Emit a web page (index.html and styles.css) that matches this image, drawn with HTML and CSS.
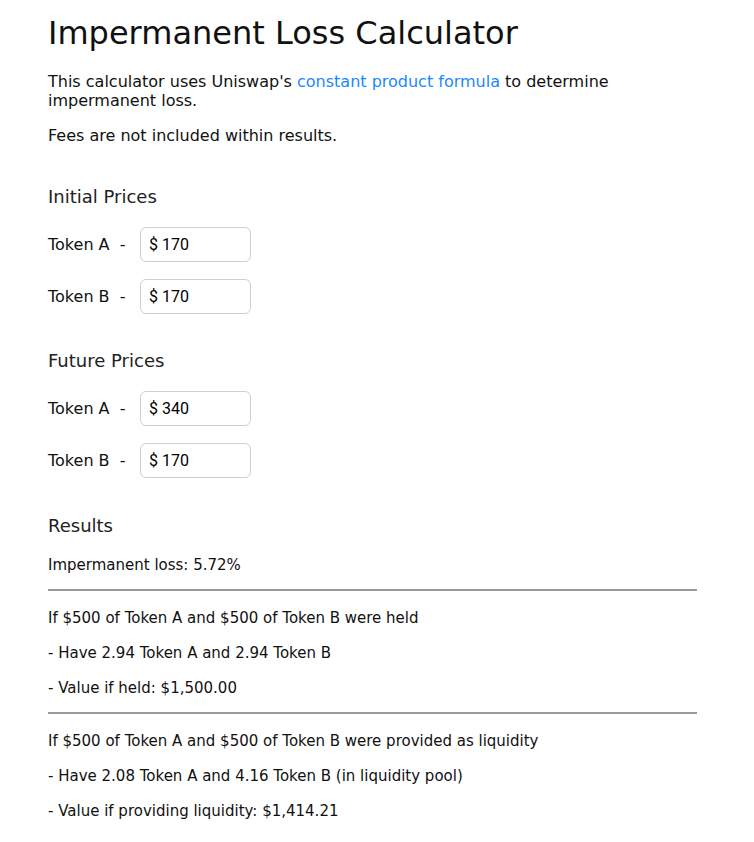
FILE: index.html
```html
<!DOCTYPE html>
<html lang="en">
<head>
<meta charset="utf-8">
<title>Impermanent Loss Calculator</title>
<link rel="stylesheet" href="styles.css">
</head>
<body>
<main class="page">
  <h1 class="title">Impermanent Loss Calculator</h1>
  <p class="intro">This calculator uses Uniswap's <a class="link" href="#">constant product formula</a> to determine impermanent loss.</p>
  <p class="note">Fees are not included within results.</p>

  <section class="group">
    <h2 class="group-title">Initial Prices</h2>
    <div class="row"><span class="label">Token A&nbsp;&nbsp;-</span><input class="price" type="text" value="$ 170"></div>
    <div class="row"><span class="label">Token B&nbsp;&nbsp;-</span><input class="price" type="text" value="$ 170"></div>
  </section>

  <section class="group group-future">
    <h2 class="group-title">Future Prices</h2>
    <div class="row"><span class="label">Token A&nbsp;&nbsp;-</span><input class="price" type="text" value="$ 340"></div>
    <div class="row"><span class="label">Token B&nbsp;&nbsp;-</span><input class="price" type="text" value="$ 170"></div>
  </section>

  <section class="results">
    <h2 class="group-title">Results</h2>
    <p class="line line-first">Impermanent loss: 5.72%</p>
    <hr class="rule">
    <p class="line line-after">If $500 of Token A and $500 of Token B were held</p>
    <p class="line">- Have 2.94 Token A and 2.94 Token B</p>
    <p class="line">- Value if held: $1,500.00</p>
    <hr class="rule">
    <p class="line line-after">If $500 of Token A and $500 of Token B were provided as liquidity</p>
    <p class="line">- Have 2.08 Token A and 4.16 Token B (in liquidity pool)</p>
    <p class="line">- Value if providing liquidity: $1,414.21</p>
  </section>
</main>
</body>
</html>
```
FILE: styles.css
```css
html, body {
  margin: 0;
  padding: 0;
  background: #ffffff;
}
body {
  font-family: "DejaVu Sans", "Open Sans", sans-serif;
  color: #111111;
}
.page {
  width: 649px;
  padding: 13px 0 20px 48px;
}
.title {
  margin: 0;
  font-size: 32px;
  font-weight: 400;
  line-height: 40px;
  color: #111;
}
.intro {
  margin: 19px 0 0;
  font-size: 16px;
  line-height: 19px;
  width: 600px;
}
.link {
  color: #1a88ff;
  text-decoration: none;
}
.note {
  margin: 16px 0 0;
  font-size: 16px;
  line-height: 19px;
}
.group {
  margin-top: 40px;
}
.group-future {
  margin-top: 35px;
}
.group-title {
  margin: 0;
  font-size: 18px;
  font-weight: 400;
  line-height: 24px;
  color: #222;
}
.row {
  display: flex;
  align-items: center;
  margin-top: 18px;
}
.row + .row {
  margin-top: 17px;
}
.label {
  font-size: 16px;
  width: 92px;
}
.price {
  box-sizing: border-box;
  width: 111px;
  height: 35px;
  padding: 0 8px;
  border: 1px solid #cfcfcf;
  border-radius: 6px;
  font-family: "Roboto", "Liberation Sans", sans-serif;
  font-size: 16px;
  color: #000;
  background: #fff;
}
.results {
  margin-top: 36px;
}
.line {
  margin: 16px 0 0;
  font-size: 15px;
  line-height: 19px;
}
.line-first {
  margin-top: 18px;
}
.line-after {
  margin-top: 18px;
}
.rule {
  margin: 14px 0 0;
  border: 0;
  border-top: 2px solid #9a9a9a;
}
```
